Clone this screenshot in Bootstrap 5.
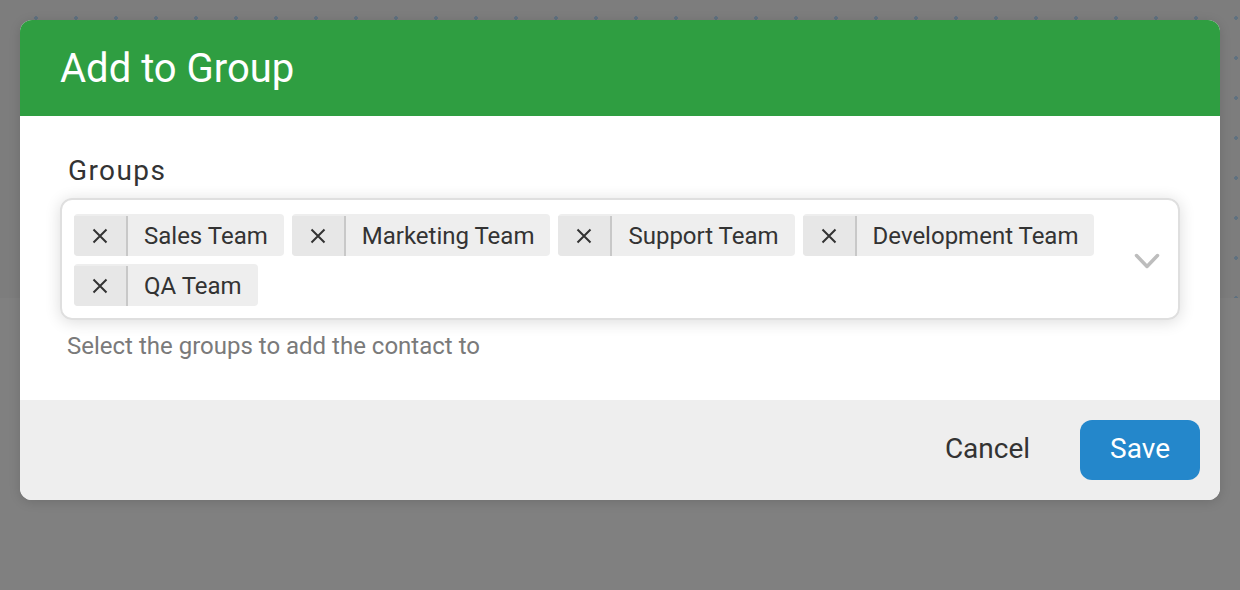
<!DOCTYPE html>
<html lang="en">
<head>
<meta charset="utf-8">
<meta name="viewport" content="width=device-width, initial-scale=1">
<title>Add to Group</title>
<link href="https://cdn.jsdelivr.net/npm/bootstrap@5.3.0/dist/css/bootstrap.min.css" rel="stylesheet">
<style>
  body {
    font-family: Roboto, "Liberation Sans", sans-serif;
    color: #333;
    background-color: #808080;
  }
  /* dotted canvas behind the dialog, dimmed by the backdrop */
  .canvas-top {
    height: 298px;
    z-index: -1;
    background: #7d7d7d radial-gradient(circle at 36px 18px, #5f7180 2px, transparent 2px) 0 0 / 40px 40px;
  }
  .group-dialog {
    margin: 20px;
    border-radius: 12px;
    overflow: hidden;
    box-shadow: 0 2px 12px rgba(0, 0, 0, .14);
  }
  .dialog-head { background: #2f9e41; padding: 21px 40px 19px; }
  .dialog-head h1 { font-size: 40px; line-height: 56px; font-weight: 400; }
  .dialog-main { padding: 33px 40px 38px; }
  .group-label { font-size: 28px; line-height: 44px; letter-spacing: .05em; padding: 0 8px; margin-bottom: 5px; }
  .group-select {
    border: 2px solid #dfdfdf;
    border-radius: 12px;
    padding: 14px 12px 12px;
    box-shadow: 0 2px 16px rgba(0, 0, 0, .14);
  }
  .tag-item { height: 42px; background: #eee; border-radius: 4px; overflow: hidden; font-size: 24px; padding-top: 2px; }
  .tag-item span { padding: 0 16px; line-height: 40px; }
  .tag-remove { width: 54px; border: 0; border-right: 2px solid #c8c8c8; background: #e7e7e7; color: #333; }
  .select-toggle { border: 0; background: none; width: 44px; padding: 2px 0 0; color: #bdbdbd; }
  .group-hint { font-size: 24px; line-height: 32px; color: #7a7a7a; padding: 0 7px; margin-top: 10px; }
  .dialog-foot { background: #eee; padding: 20px; gap: 20px; }
  .dialog-foot .btn { font-size: 28px; line-height: 36px; padding: 11px 30px 13px; border: 0; border-radius: 12px; }
  .btn-plain { --bs-btn-color: #333; }
  .btn-save { --bs-btn-color: #fff; --bs-btn-bg: #2487cb; --bs-btn-hover-color: #fff; --bs-btn-hover-bg: #1d76b3; }
</style>
</head>
<body>
<div class="canvas-top position-absolute top-0 start-0 w-100"></div>
<form class="group-dialog bg-white" role="dialog" aria-labelledby="dialogTitle">
  <header class="dialog-head text-white">
    <h1 class="m-0" id="dialogTitle">Add to Group</h1>
  </header>
  <div class="dialog-main">
    <div class="group-label" id="groupLabel">Groups</div>
    <div class="group-select d-flex align-items-center" role="group" aria-labelledby="groupLabel" aria-describedby="groupHint">
      <div class="d-flex flex-wrap flex-grow-1 gap-2">
        <div class="tag-item d-flex"><button type="button" class="tag-remove p-0 d-flex align-items-center justify-content-center" aria-label="Remove Sales Team"><svg width="16" height="16" viewBox="0 0 16 16" fill="none" stroke="currentColor" stroke-width="2"><path d="M1.5 1.5l13 13M14.5 1.5l-13 13"/></svg></button><span>Sales Team</span></div>
        <div class="tag-item d-flex"><button type="button" class="tag-remove p-0 d-flex align-items-center justify-content-center" aria-label="Remove Marketing Team"><svg width="16" height="16" viewBox="0 0 16 16" fill="none" stroke="currentColor" stroke-width="2"><path d="M1.5 1.5l13 13M14.5 1.5l-13 13"/></svg></button><span>Marketing Team</span></div>
        <div class="tag-item d-flex"><button type="button" class="tag-remove p-0 d-flex align-items-center justify-content-center" aria-label="Remove Support Team"><svg width="16" height="16" viewBox="0 0 16 16" fill="none" stroke="currentColor" stroke-width="2"><path d="M1.5 1.5l13 13M14.5 1.5l-13 13"/></svg></button><span>Support Team</span></div>
        <div class="tag-item d-flex"><button type="button" class="tag-remove p-0 d-flex align-items-center justify-content-center" aria-label="Remove Development Team"><svg width="16" height="16" viewBox="0 0 16 16" fill="none" stroke="currentColor" stroke-width="2"><path d="M1.5 1.5l13 13M14.5 1.5l-13 13"/></svg></button><span>Development Team</span></div>
        <div class="tag-item d-flex"><button type="button" class="tag-remove p-0 d-flex align-items-center justify-content-center" aria-label="Remove QA Team"><svg width="16" height="16" viewBox="0 0 16 16" fill="none" stroke="currentColor" stroke-width="2"><path d="M1.5 1.5l13 13M14.5 1.5l-13 13"/></svg></button><span>QA Team</span></div>
      </div>
      <button type="button" class="select-toggle d-flex align-items-center justify-content-center" aria-label="Show groups"><svg width="26" height="16" viewBox="0 0 26 16" fill="none" stroke="currentColor" stroke-width="3.500" stroke-linecap="round" stroke-linejoin="round"><path d="M2.500 2.500L13 13.500 23.500 2.500"/></svg></button>
    </div>
    <div class="group-hint" id="groupHint">Select the groups to add the contact to</div>
  </div>
  <footer class="dialog-foot d-flex justify-content-end">
    <button type="button" class="btn btn-plain">Cancel</button>
    <button type="submit" class="btn btn-save">Save</button>
  </footer>
</form>
<script src="https://cdn.jsdelivr.net/npm/bootstrap@5.3.0/dist/js/bootstrap.bundle.min.js"></script>
</body>
</html>
